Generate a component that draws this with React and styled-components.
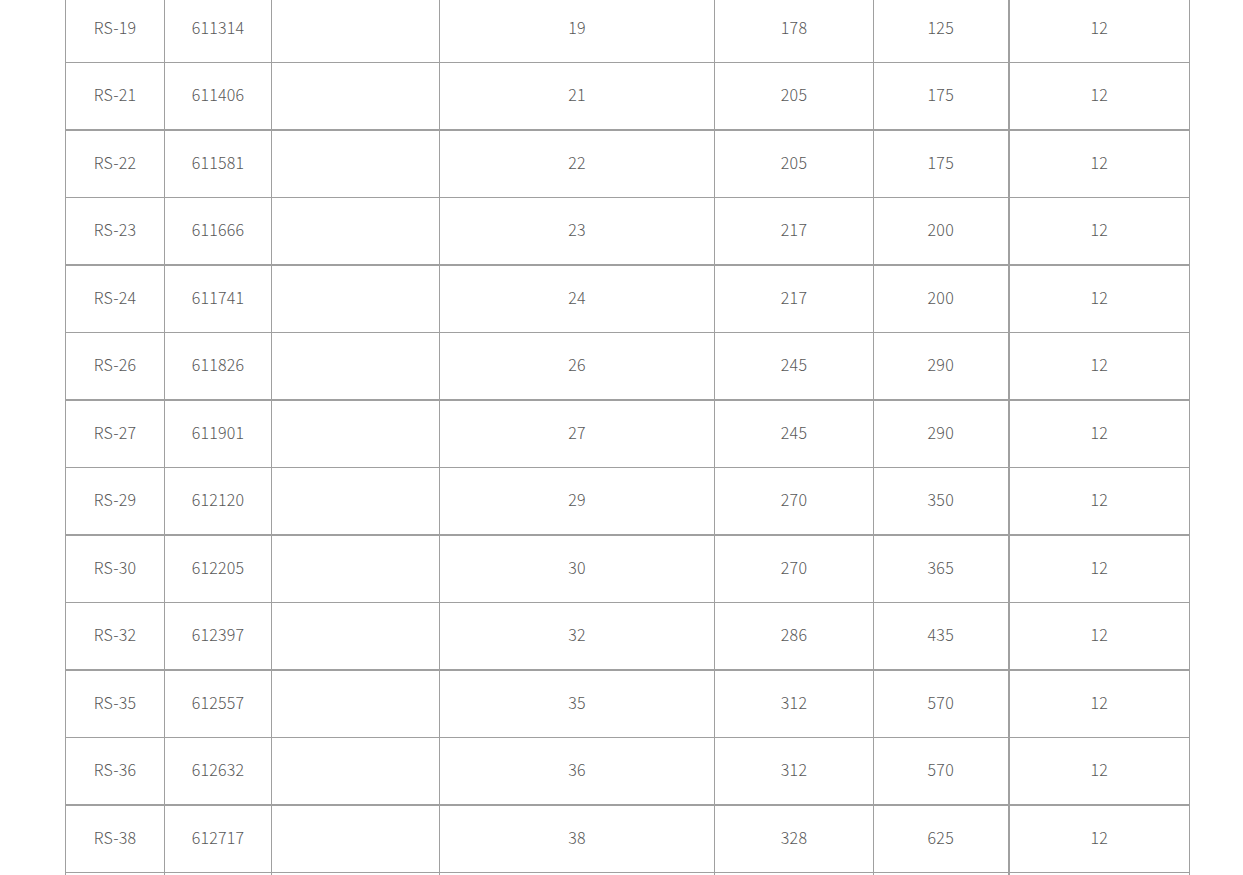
import React from 'react';
import styled, { createGlobalStyle } from 'styled-components';

const GlobalStyle = createGlobalStyle`
    body {
        margin: 0;
        background: #fff;
        overflow: hidden;
    }
`;

const Wrapper = styled.div`
    padding-left: 65px;
    margin-top: -6px;
`;

const Table = styled.table`
    border-collapse: collapse;
    table-layout: fixed;
    width: 1124px;
    font-family: "Noto Sans CJK JP", "Noto Sans", sans-serif;
    font-weight: 300;
    font-size: 16px;
    color: #585858;
`;

const Row = styled.tr`
    height: ${p => (p.$group ? 67 : 68)}px;
`;

const Cell = styled.td`
    border: 1px solid #a0a0a0;
    border-bottom-width: ${p => (p.$group ? 2 : 1)}px;
    border-left-width: ${p => (p.$split ? 2 : 1)}px;
    text-align: center;
    vertical-align: middle;
    padding: 0 0 4px;
    letter-spacing: 0.2px;
`;

const widths = [99, 107, 168, 275, 159, 135, 181];

const rows = [
    ['RS-19', '611314', '', '19', '178', '125', '12'],
    ['RS-21', '611406', '', '21', '205', '175', '12'],
    ['RS-22', '611581', '', '22', '205', '175', '12'],
    ['RS-23', '611666', '', '23', '217', '200', '12'],
    ['RS-24', '611741', '', '24', '217', '200', '12'],
    ['RS-26', '611826', '', '26', '245', '290', '12'],
    ['RS-27', '611901', '', '27', '245', '290', '12'],
    ['RS-29', '612120', '', '29', '270', '350', '12'],
    ['RS-30', '612205', '', '30', '270', '365', '12'],
    ['RS-32', '612397', '', '32', '286', '435', '12'],
    ['RS-35', '612557', '', '35', '312', '570', '12'],
    ['RS-36', '612632', '', '36', '312', '570', '12'],
    ['RS-38', '612717', '', '38', '328', '625', '12'],
    ['', '', '', '', '', '', ''],
];

const App = () => (
    <>
        <GlobalStyle />
        <Wrapper>
            <Table>
                <colgroup>
                    {widths.map((w, i) => <col key={i} style={{ width: w }} />)}
                </colgroup>
                <tbody>
                    {rows.map((r, i) => {
                        const group = i % 2 === 1;
                        return (
                            <Row key={i} $group={group}>
                                {r.map((c, j) => (
                                    <Cell key={j} $group={group} $split={j === 6}>{c}</Cell>
                                ))}
                            </Row>
                        );
                    })}
                </tbody>
            </Table>
        </Wrapper>
    </>
);

export default App;
